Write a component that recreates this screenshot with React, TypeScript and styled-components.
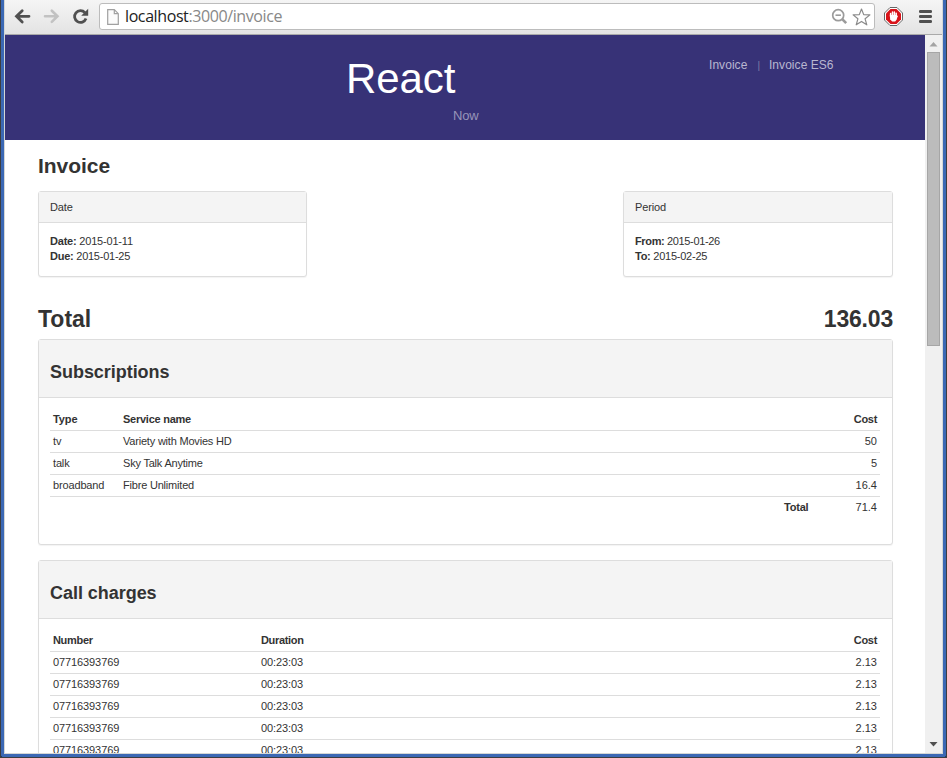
import React from "react";
import styled, { createGlobalStyle } from "styled-components";

const GlobalStyle = createGlobalStyle`
  *, *::before, *::after { box-sizing: border-box; }
  html, body { margin: 0; padding: 0; overflow: hidden; background: #000; }
  body { font-family: "Liberation Sans", Arial, sans-serif; font-size: 11px; line-height: 15px; color: #333; }
`;

const OuterFrame = styled.div`
  width: 947px;
  height: 758px;
  border: solid #3c3d40;
  border-width: 0 1px 1px;
`;

const BlueFrame = styled.div`
  height: 100%;
  border: 3px solid #3b68b4;
  border-top: 0;
  border-radius: 0 0 2px 2px;
  background: #2f549b;
`;

const Browser = styled.div`
  height: 100%;
  display: flex;
  flex-direction: column;
  border: 1px solid #d4d7d6;
  border-top: 0;
  background: #fff;
`;

const Toolbar = styled.div`
  flex: none;
  height: 35px;
  display: flex;
  align-items: flex-start;
  padding-left: 8px;
  background: linear-gradient(#f5f5f5, #e3e3e3);
  border-bottom: 1px solid #a9a9a9;
`;

const NavIcon = styled.svg<{ $gap: number }>`
  flex: none;
  margin-top: 7px;
  margin-right: ${(p) => p.$gap}px;
`;

const AddressBar = styled.div`
  width: 776px;
  height: 27px;
  margin-top: 3px;
  display: flex;
  align-items: center;
  padding: 0 3px 0 7px;
  background: #fff;
  border: 1px solid #bcbcbc;
  border-radius: 3px;
`;

const Url = styled.div`
  flex: 1;
  margin-left: 6px;
  padding-bottom: 1px;
  font: 16px/24px "Open Sans", "Noto Sans", sans-serif;
  letter-spacing: -0.4px;
  color: #888;
  white-space: nowrap;
`;

const Host = styled.span`
  color: #222;
`;

const Viewport = styled.div`
  flex: 1;
  min-height: 0;
  display: flex;
`;

const Page = styled.div`
  width: 920px;
  overflow: hidden;
`;

const Banner = styled.header`
  height: 105px;
  display: flex;
  background: #373277;
  color: #a5a2c4;
`;

const Brand = styled.div`
  width: 704px;
  padding: 20px 0 0 340px;
`;

const BrandName = styled.div`
  padding-left: 1px;
  font-size: 42px;
  line-height: 48px;
  letter-spacing: -0.1px;
  color: #fff;
`;

const Tagline = styled.div`
  padding: 5px 0 0 108px;
  font-size: 13px;
  line-height: 16px;
  letter-spacing: -0.2px;
  color: #9895b9;
`;

const Nav = styled.nav`
  display: flex;
  gap: 9px;
  padding-top: 22px;
  font-size: 12px;
  line-height: 16px;
`;

const NavLink = styled.a`
  letter-spacing: 0.05px;
  color: #b9b7d0;
`;

const Divider = styled.span`
  padding: 1px 0 0 1px;
  font-size: 10px;
  color: #7f7baa;
`;

const Content = styled.main`
  padding: 0 32px 0 33px;
`;

const Title = styled.h1`
  margin: 0;
  padding-top: 14px;
  font-size: 21px;
  line-height: 24px;
  letter-spacing: -0.05px;
`;

const Columns = styled.div`
  display: flex;
  justify-content: space-between;
  margin-top: 13px;
`;

const Panel = styled.section`
  border: 1px solid #ddd;
  border-radius: 3px;
  box-shadow: 0 1px 1px rgba(0, 0, 0, 0.05);
  background: #fff;
`;

const InfoPanel = styled(Panel)<{ $width: number }>`
  width: ${(p) => p.$width}px;
  height: 86px;
`;

const InfoHeading = styled.div`
  height: 31px;
  padding: 8px 11px;
  letter-spacing: -0.15px;
  background: #f4f4f4;
  border-bottom: 1px solid #ddd;
`;

const InfoBody = styled.div`
  padding: 11px;
`;

const InfoLine = styled.div<{ $spacing: number }>`
  letter-spacing: ${(p) => p.$spacing}px;
`;

const TotalRow = styled.div`
  display: flex;
  justify-content: space-between;
  margin-top: 29px;
  font-size: 23px;
  line-height: 26px;
  font-weight: bold;
`;

const GrandTotal = styled.span`
  letter-spacing: -0.2px;
`;

const TablePanel = styled(Panel)<{ $height: number; $top: number }>`
  height: ${(p) => p.$height}px;
  margin-top: ${(p) => p.$top}px;
`;

const SectionHeading = styled.h2`
  height: 58px;
  margin: 0;
  padding: 22px 11px 0;
  font-size: 18px;
  line-height: 21px;
  letter-spacing: -0.04px;
  background: #f4f4f4;
  border-bottom: 1px solid #ddd;
`;

const Rows = styled.div`
  padding: 11px 12px 0 11px;
`;

const Row = styled.div<{ $columns: string }>`
  display: grid;
  grid-template-columns: ${(p) => p.$columns};
  height: 22px;
  padding: 3px;
  border-top: 1px solid #ddd;
`;

const HeadRow = styled(Row)`
  height: 21px;
  border-top: 0;
  font-weight: bold;
  letter-spacing: -0.32px;
`;

const Cell = styled.span<{ $right?: boolean; $bold?: boolean; $spacing?: number }>`
  text-align: ${(p) => (p.$right ? "right" : "left")};
  font-weight: ${(p) => (p.$bold ? "bold" : "inherit")};
  letter-spacing: ${(p) => (p.$spacing === undefined ? "inherit" : `${p.$spacing}px`)};
`;

const Scrollbar = styled.div`
  width: 17px;
  display: flex;
  flex-direction: column;
  align-items: center;
  background: #f0f0f0;
`;

const ScrollButton = styled.svg`
  flex: none;
  display: block;
`;

const Thumb = styled.div`
  width: 13px;
  height: 294px;
  margin-right: 1px;
  background: #bcbcbc;
  border: 1px solid #a6a6a6;
`;

const Track = styled.div`
  flex: 1;
`;

const services = [
  ["tv", "Variety with Movies HD", "50"],
  ["talk", "Sky Talk Anytime", "5"],
  ["broadband", "Fibre Unlimited", "16.4"],
];
const calls = Array.from({ length: 5 }, () => ["07716393769", "00:23:03", "2.13"]);
const serviceColumns = "70px 661px 1fr";
const callColumns = "208px 500px 1fr";

function BackIcon() {
  return (
    <NavIcon $gap={11} width="18" height="18" viewBox="0 0 18 18">
      <path d="M16 9.3H4M9.2 3.7L3.5 9.3l5.7 5.6" fill="none" stroke="#505050" strokeWidth="2.8" strokeLinecap="round" />
    </NavIcon>
  );
}

function ForwardIcon() {
  return (
    <NavIcon $gap={11} width="18" height="18" viewBox="0 0 18 18">
      <path d="M3 9.3h12M9.8 3.7l5.7 5.6-5.7 5.6" fill="none" stroke="#c2c2c2" strokeWidth="2.6" strokeLinecap="round" />
    </NavIcon>
  );
}

function ReloadIcon() {
  return (
    <NavIcon $gap={10} width="18" height="18" viewBox="0 0 18 18">
      <path d="M13.9 5.6A5.9 5.9 0 1 0 15 11.6" fill="none" stroke="#505050" strokeWidth="2.8" />
      <path d="M17.2 1.8v7h-7z" fill="#505050" />
    </NavIcon>
  );
}

function DocumentIcon() {
  return (
    <svg width="12" height="16" viewBox="0 0 12 16">
      <path d="M.7.7h6.6l4 4v10.6H.7zM7.3.7v4h4" fill="#fbfbfb" stroke="#a0a0a0" strokeWidth="1.2" />
    </svg>
  );
}

function ZoomOutIcon() {
  return (
    <svg width="17" height="17" viewBox="0 0 17 17">
      <circle cx="7.2" cy="7.2" r="5.5" fill="none" stroke="#9b9b9b" strokeWidth="1.7" />
      <path d="M4.5 7.2h5.4" stroke="#9b9b9b" strokeWidth="1.6" />
      <path d="M11.2 11.2l4 4" stroke="#9b9b9b" strokeWidth="2.6" />
    </svg>
  );
}

const Star = styled.svg`
  margin-left: 4px;
`;

function StarIcon() {
  return (
    <Star width="19" height="18" viewBox="0 0 19 18">
      <path d="M9.5 1l2.2 5.6 6.2.3-4.8 3.9 1.7 6-5.3-3.4-5.3 3.4 1.7-6L1.1 6.9l6.2-.3z" fill="#fff" stroke="#8a8a8a" strokeWidth="1.2" strokeLinejoin="round" />
    </Star>
  );
}

const BlockerSvg = styled.svg`
  margin: 7px 0 0 9px;
`;

function BlockerIcon() {
  return (
    <BlockerSvg width="19" height="19" viewBox="0 0 19 19">
      <path d="M6 .5h7L18.5 6v7L13 18.5H6L.5 13V6z" fill="#fff" stroke="#666" />
      <path d="M6.5 2h6L17 6.5v6L12.5 17h-6L2 12.5v-6z" fill="#d8141a" />
      <path d="M6.6 9.5V6.4M8.5 8.5V5M10.4 8.5V5M12.2 9V6.2" stroke="#fff" strokeWidth="1.5" strokeLinecap="round" />
      <path d="M5.8 8h7.2l.7 1.2-1.1 3.6-1.4 1.6H8.2l-2-2z" fill="#fff" />
    </BlockerSvg>
  );
}

const MenuSvg = styled.svg`
  margin: 10px 0 0 16px;
`;

function MenuIcon() {
  return (
    <MenuSvg width="13" height="13" viewBox="0 0 13 13">
      <path d="M1.3 1.5h10.4M1.3 6.5h10.4M1.3 11.5h10.4" stroke="#505050" strokeWidth="2.8" strokeLinecap="round" />
    </MenuSvg>
  );
}

export default function App() {
  return (
    <OuterFrame>
      <GlobalStyle />
      <BlueFrame>
        <Browser>
          <Toolbar>
            <BackIcon />
            <ForwardIcon />
            <ReloadIcon />
            <AddressBar>
              <DocumentIcon />
              <Url><Host>localhost</Host>:3000/invoice</Url>
              <ZoomOutIcon />
              <StarIcon />
            </AddressBar>
            <BlockerIcon />
            <MenuIcon />
          </Toolbar>
          <Viewport>
            <Page>
              <Banner>
                <Brand>
                  <BrandName>React</BrandName>
                  <Tagline>Now</Tagline>
                </Brand>
                <Nav>
                  <NavLink>Invoice</NavLink>
                  <Divider>|</Divider>
                  <NavLink>Invoice ES6</NavLink>
                </Nav>
              </Banner>
              <Content>
                <Title>Invoice</Title>
                <Columns>
                  <InfoPanel $width={269}>
                    <InfoHeading>Date</InfoHeading>
                    <InfoBody>
                      <InfoLine $spacing={-0.2}><b>Date:</b> 2015-01-11</InfoLine>
                      <InfoLine $spacing={-0.25}><b>Due:</b> 2015-01-25</InfoLine>
                    </InfoBody>
                  </InfoPanel>
                  <InfoPanel $width={270}>
                    <InfoHeading>Period</InfoHeading>
                    <InfoBody>
                      <InfoLine $spacing={-0.36}><b>From:</b> 2015-01-26</InfoLine>
                      <InfoLine $spacing={-0.25}><b>To:</b> 2015-02-25</InfoLine>
                    </InfoBody>
                  </InfoPanel>
                </Columns>
                <TotalRow>
                  <span>Total</span>
                  <GrandTotal>136.03</GrandTotal>
                </TotalRow>
                <TablePanel $height={206} $top={7}>
                  <SectionHeading>Subscriptions</SectionHeading>
                  <Rows>
                    <HeadRow $columns={serviceColumns}>
                      <Cell $spacing={-0.1}>Type</Cell>
                      <Cell $spacing={-0.25}>Service name</Cell>
                      <Cell $right>Cost</Cell>
                    </HeadRow>
                    {services.map(([type, name, cost]) => (
                      <Row key={type} $columns={serviceColumns}>
                        <Cell $spacing={-0.15}>{type}</Cell>
                        <Cell $spacing={-0.2}>{name}</Cell>
                        <Cell $right>{cost}</Cell>
                      </Row>
                    ))}
                    <Row $columns={serviceColumns.replace("1fr", "26px 1fr")}>
                      <Cell />
                      <Cell $right $bold $spacing={-0.2} />
                      <Cell $bold $spacing={-0.2}>Total</Cell>
                      <Cell $right>71.4</Cell>
                    </Row>
                  </Rows>
                </TablePanel>
                <TablePanel $height={760} $top={15}>
                  <SectionHeading>Call charges</SectionHeading>
                  <Rows>
                    <HeadRow $columns={callColumns}>
                      <Cell>Number</Cell>
                      <Cell>Duration</Cell>
                      <Cell $right>Cost</Cell>
                    </HeadRow>
                    {calls.map(([number, duration, cost], i) => (
                      <Row key={i} $columns={callColumns}>
                        <Cell $spacing={-0.1}>{number}</Cell>
                        <Cell $spacing={-0.1}>{duration}</Cell>
                        <Cell $right>{cost}</Cell>
                      </Row>
                    ))}
                  </Rows>
                </TablePanel>
              </Content>
            </Page>
            <Scrollbar>
              <ScrollButton width="17" height="17" viewBox="0 0 17 17">
                <path d="M4.5 11.5h8l-4-4.5z" fill="#a3a3a3" />
              </ScrollButton>
              <Thumb />
              <Track />
              <ScrollButton width="17" height="17" viewBox="0 0 17 17">
                <path d="M4.5 6h8l-4 4.5z" fill="#505050" />
              </ScrollButton>
            </Scrollbar>
          </Viewport>
        </Browser>
      </BlueFrame>
    </OuterFrame>
  );
}
